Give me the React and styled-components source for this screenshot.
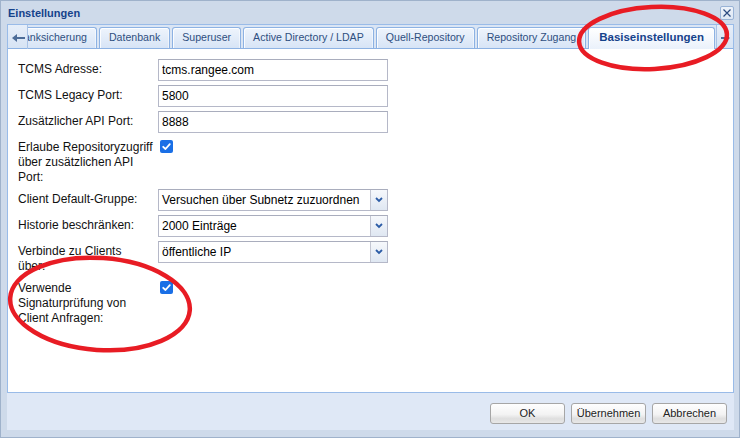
import React from 'react';
import styled, { createGlobalStyle } from 'styled-components';

const GlobalStyle = createGlobalStyle`
  html, body { margin: 0; padding: 0; background: #fff; }
  body { font-family: "Liberation Sans", Arial, sans-serif; }
  * { box-sizing: border-box; }
`;

const FONT = `"Liberation Sans", Arial, sans-serif`;

const Window = styled.div`
  position: relative;
  width: 740px;
  height: 438px;
  background: #cedaea;
  border: 1px solid #9fb2cb;
  display: flex;
  flex-direction: column;
  overflow: hidden;
  font-family: ${FONT};
`;

const TitleBar = styled.div`
  height: 23px;
  flex: none;
  display: flex;
  align-items: center;
  justify-content: space-between;
  padding: 0 5px 0 7px;
`;

const Title = styled.span`
  font: bold 11px ${FONT};
  color: #15428b;
`;

const CloseButton = styled.div`
  width: 14px;
  height: 14px;
  border: 1px solid #99b3d6;
  border-radius: 2px;
  background: linear-gradient(#eef3fa, #dde7f4);
  display: flex;
  align-items: center;
  justify-content: center;
`;

const Body = styled.div`
  flex: 1;
  display: flex;
  flex-direction: column;
  margin: 0 5px 7px 6px;
`;

const TabHeader = styled.div`
  height: 25px;
  flex: none;
  display: flex;
  background: #dae5f4;
  border: 1px solid #99bbe8;
  border-bottom: none;
`;

const Scroller = styled.div`
  width: ${p => (p.$side === 'left' ? 20 : 17)}px;
  flex: none;
  display: flex;
  align-items: center;
  justify-content: ${p => (p.$side === 'left' ? 'flex-start' : 'center')};
  padding-left: ${p => (p.$side === 'left' ? 4 : 0)}px;
  padding-top: 2px;
  background:
    linear-gradient(to top, #8db2e3 1px, transparent 1px),
    linear-gradient(#e6eef9, #d6e3f4);
  border-${p => (p.$side === 'left' ? 'right' : 'left')}: 1px solid #a9c3e6;
`;

const TabStrip = styled.div`
  flex: 1;
  min-width: 0;
  height: 24px;
  overflow: hidden;
  display: flex;
  align-items: flex-end;
  justify-content: flex-end;
  gap: 2px;
  padding-right: 1px;
  background: linear-gradient(to top, #8db2e3 1px, transparent 1px);
`;

const Tab = styled.div`
  flex: none;
  height: ${p => (p.$active ? 22 : 21)}px;
  margin-bottom: ${p => (p.$active ? 0 : 1)}px;
  padding: 0 ${p => (p.$active ? 10 : 9)}px;
  border: 1px solid #8db2e3;
  border-bottom: none;
  border-radius: 3px 3px 0 0;
  background: ${p =>
    p.$active
      ? 'linear-gradient(#ffffff, #eaf1fb)'
      : 'linear-gradient(#eef4fc, #d7e4f6)'};
  box-shadow: inset 1px 1px 0 rgba(255, 255, 255, 0.85),
    inset -1px 0 0 rgba(255, 255, 255, 0.5);
  font-family: ${FONT};
  font-size: ${p => (p.$active ? '11.5px' : '10.6px')};
  font-weight: ${p => (p.$active ? 'bold' : 'normal')};
  color: ${p => (p.$active ? '#15428b' : '#2f4f7f')};
  line-height: 19px;
  white-space: nowrap;
`;

const Panel = styled.div`
  flex: 1;
  background: #fff;
  border: 1px solid #99bbe8;
  border-top: none;
  padding: 10px 10px;
`;

const Row = styled.div`
  display: flex;
  align-items: flex-start;
  margin-bottom: 4px;
`;

const Label = styled.div`
  width: 140px;
  flex: none;
  padding-top: 3px;
  font-size: 12px;
  line-height: 15px;
  color: #111;
`;

const TextField = styled.input`
  width: 230px;
  height: 22px;
  border: 1px solid #b5b8c8;
  border-top-color: #a9adbd;
  padding: 0 3px;
  margin: 0;
  font: 12px ${FONT};
  color: #000;
  background: #fff;
  outline: none;
`;

const Combo = styled.div`
  width: 230px;
  height: 22px;
  display: flex;
  border: 1px solid #b5b8c8;
  border-top-color: #a9adbd;
  background: #fff;
`;

const ComboText = styled.div`
  flex: 1;
  min-width: 0;
  overflow: hidden;
  white-space: nowrap;
  padding: 0 3px;
  font-size: 12px;
  line-height: 20px;
  color: #000;
`;

const Trigger = styled.div`
  width: 17px;
  flex: none;
  border-left: 1px solid #c3c6d2;
  background: linear-gradient(#f6f8fc, #dfe7f2);
  display: flex;
  align-items: center;
  justify-content: center;
`;

const Check = styled.div`
  width: 13px;
  height: 13px;
  margin: 3px 0 0 2px;
  border-radius: 2px;
  background: #1a6fe6;
  display: flex;
  align-items: center;
  justify-content: center;
`;

const Footer = styled.div`
  height: 37px;
  flex: none;
  background: #dfe8f6;
  display: flex;
  justify-content: flex-end;
  align-items: flex-start;
  gap: 6px;
  padding: 10px 7px 0 0;
`;

const Button = styled.div`
  width: 75px;
  height: 21px;
  border: 1px solid #a6a6a6;
  border-radius: 3px;
  background: linear-gradient(#fefefe 0%, #f3f3f3 55%, #dedede 78%, #e8e8e8 100%);
  font-size: 11px;
  line-height: 19px;
  text-align: center;
  color: #222;
`;

const Annotations = styled.svg`
  position: absolute;
  left: -1px;
  top: -1px;
  pointer-events: none;
`;

const ArrowLeft = () => (
  <svg width="13" height="8" viewBox="0 0 13 8">
    <polygon points="0,4 5,0 5,8" fill="#4c6c98" />
    <rect x="5" y="3" width="8" height="2" fill="#4c6c98" />
  </svg>
);

const ArrowRight = () => (
  <svg width="9" height="8" viewBox="0 0 9 8">
    <rect x="0" y="3" width="4" height="2" fill="#4c6c98" />
    <polygon points="9,4 4,0 4,8" fill="#4c6c98" />
  </svg>
);

const Chevron = () => (
  <svg width="8" height="6" viewBox="0 0 8 6">
    <polyline points="1,1 4,4 7,1" fill="none" stroke="#2c5ca6" strokeWidth="1.8" />
  </svg>
);

const Tick = () => (
  <svg width="11" height="11" viewBox="0 0 11 11">
    <polyline points="2.2,5.8 4.5,8 8.8,3.2" fill="none" stroke="#fff" strokeWidth="1.8" strokeLinecap="round" strokeLinejoin="round" />
  </svg>
);

const tabs = [
  'Datenbanksicherung',
  'Datenbank',
  'Superuser',
  'Active Directory / LDAP',
  'Quell-Repository',
  'Repository Zugang',
];

export default function App() {
  return (
    <>
      <GlobalStyle />
      <Window>
        <TitleBar>
          <Title>Einstellungen</Title>
          <CloseButton>
            <svg width="8" height="8" viewBox="0 0 8 8">
              <path d="M0.5 0.5 L7.5 7.5 M7.5 0.5 L0.5 7.5" stroke="#2a4a80" strokeWidth="1.2" />
            </svg>
          </CloseButton>
        </TitleBar>
        <Body>
          <TabHeader>
            <Scroller $side="left"><ArrowLeft /></Scroller>
            <TabStrip>
              {tabs.map(t => <Tab key={t}>{t}</Tab>)}
              <Tab $active>Basiseinstellungen</Tab>
            </TabStrip>
            <Scroller $side="right"><ArrowRight /></Scroller>
          </TabHeader>
          <Panel>
            <Row>
              <Label>TCMS Adresse:</Label>
              <TextField readOnly value="tcms.rangee.com" />
            </Row>
            <Row>
              <Label>TCMS Legacy Port:</Label>
              <TextField readOnly value="5800" />
            </Row>
            <Row>
              <Label>Zusätzlicher API Port:</Label>
              <TextField readOnly value="8888" />
            </Row>
            <Row>
              <Label>Erlaube Repositoryzugriff<br />über zusätzlichen API<br />Port:</Label>
              <Check><Tick /></Check>
            </Row>
            <Row>
              <Label>Client Default-Gruppe:</Label>
              <Combo>
                <ComboText>Versuchen über Subnetz zuzuordnen</ComboText>
                <Trigger><Chevron /></Trigger>
              </Combo>
            </Row>
            <Row>
              <Label>Historie beschränken:</Label>
              <Combo>
                <ComboText>2000 Einträge</ComboText>
                <Trigger><Chevron /></Trigger>
              </Combo>
            </Row>
            <Row>
              <Label>Verbinde zu Clients<br />über:</Label>
              <Combo>
                <ComboText>öffentliche IP</ComboText>
                <Trigger><Chevron /></Trigger>
              </Combo>
            </Row>
            <Row>
              <Label>Verwende<br />Signaturprüfung von<br />Client Anfragen:</Label>
              <Check><Tick /></Check>
            </Row>
          </Panel>
          <Footer>
            <Button>OK</Button>
            <Button>Übernehmen</Button>
            <Button>Abbrechen</Button>
          </Footer>
        </Body>
        <Annotations width="740" height="438" viewBox="0 0 740 438">
          <ellipse cx="653" cy="38" rx="74" ry="31" transform="rotate(-3 653 38)" fill="none" stroke="#e81c24" strokeWidth="4.5" />
          <ellipse cx="100" cy="304" rx="90" ry="46" transform="rotate(4 100 304)" fill="none" stroke="#e81c24" strokeWidth="4.5" />
        </Annotations>
      </Window>
    </>
  );
}
